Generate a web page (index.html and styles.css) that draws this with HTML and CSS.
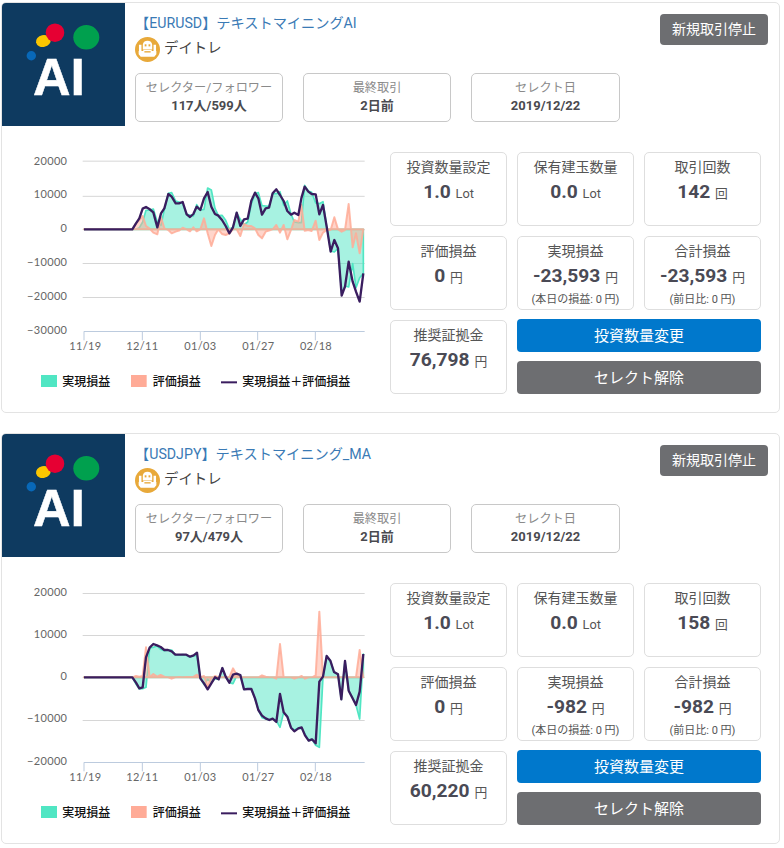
FILE: index.html
```html
<!DOCTYPE html>
<html lang="ja">
<head>
<meta charset="utf-8">
<title>セレクト一覧</title>
<link rel="stylesheet" href="styles.css">
</head>
<body>
<svg class="defs" width="0" height="0" aria-hidden="true">
  <defs>
    <symbol id="ai-logo" viewBox="0 0 123 123">
      <rect width="123" height="123" class="logo-bg"/>
      <ellipse cx="41.3" cy="38" rx="7.4" ry="6" transform="rotate(-12 41.3 38)" class="logo-yellow"/>
      <circle cx="53" cy="29.7" r="9.3" class="logo-red"/>
      <ellipse cx="84.3" cy="34.3" rx="13" ry="12.2" class="logo-green"/>
      <circle cx="29.3" cy="52.7" r="4.7" class="logo-blue"/>
      <text x="31" y="92" class="logo-text">AI</text>
    </symbol>
    <symbol id="trader" viewBox="0 0 24 24">
      <circle cx="12" cy="12" r="12" class="ic-bg"/>
      <path d="M7.500 12V7.500C7.500 5 9.500 3.500 12 3.500S16.500 5 16.500 7.500V12Z" class="ic-fg"/>
      <rect x="9.300" y="7" width="1.700" height="2" class="ic-bg"/>
      <rect x="13" y="7" width="1.700" height="2" class="ic-bg"/>
      <path d="M3.800 7.500h2.400v6h-2.400zM17.800 7.500h2.400v6h-2.400z" class="ic-fg"/>
      <path d="M3.500 13.500h4.500v-1h8v1h4.500v3l-2 2.500H5.500l-2-2.500z" class="ic-fg"/>
      <rect x="9" y="13.600" width="6" height="1.300" class="ic-bg"/>
    </symbol>
    <g id="legend">
      <rect x="123" y="705" width="48" height="36" class="sw-mint"/>
      <text x="187" y="737" class="lg">実現損益</text>
      <rect x="393" y="705" width="47" height="36" class="sw-pink"/>
      <text x="458" y="737" class="lg">評価損益</text>
      <rect x="663" y="724" width="48" height="6" class="sw-line"/>
      <text x="727" y="737" class="lg">実現損益＋評価損益</text>
    </g>
    <g id="xaxis">
      <path d="M252 574.500H1094M252 574V601M427 574V601M601 574V601M773 574V601M946 574V601" class="axis"/>
      <text x="256" y="629" class="tick mid">11/19</text>
      <text x="427" y="629" class="tick mid">12/11</text>
      <text x="601" y="629" class="tick mid">01/03</text>
      <text x="775" y="629" class="tick mid">01/27</text>
      <text x="948" y="629" class="tick mid">02/18</text>
    </g>
  </defs>
</svg>

<article class="card">
  <header class="head">
    <svg class="logo"><use href="#ai-logo"/></svg>
    <div class="info">
      <a class="title">【EURUSD】テキストマイニングAI</a>
      <div class="style-row"><svg class="style-icon"><use href="#trader"/></svg><span class="style-name">デイトレ</span></div>
      <div class="meta">
        <div class="meta-box"><span class="meta-label">セレクター/フォロワー</span><strong>117人/599人</strong></div>
        <div class="meta-box"><span class="meta-label">最終取引</span><strong>2日前</strong></div>
        <div class="meta-box"><span class="meta-label">セレクト日</span><strong>2019/12/22</strong></div>
      </div>
    </div>
    <button class="stop">新規取引停止</button>
  </header>
  <div class="body">
    <svg class="chart" viewBox="6 0 1134 810">
      <path d="M248 63.500H1094M248 169H1094M248 268.500H1094M248 370.500H1094M248 472.500H1094" class="grid"/>
      <use href="#xaxis"/>
      <text x="202" y="74" class="tick end">20000</text>
      <text x="202" y="175" class="tick end">10000</text>
      <text x="202" y="276" class="tick end">0</text>
      <text x="202" y="378" class="tick end">−10000</text>
      <text x="202" y="479" class="tick end">−20000</text>
      <text x="202" y="581" class="tick end">−30000</text>
      <polygon class="mint" points="252,268 397,268 408,268 418,263 428,246 438,211 448,210 460,207 472,247 483,256 493,208 505,160 515,158 527,183 537,186 548,191 560,223 570,225 580,228 590,194 601,210 612,208 623,144 634,150 645,205 655,227 666,226 677,241 688,268 699,262 710,218 721,238 732,254 743,246 754,192 765,161 775,158 786,197 797,198 807,199 818,160 829,161 840,155 851,196 862,183 873,222 883,246 895,248 904,248 914,136 925,153 935,157 947,189 958,191 969,185 980,258 992,333 1003,336 1014,325 1025,460 1035,438 1046,441 1058,371 1068,443 1079,413 1090,400 1090,268"/>
      <polygon class="pink" points="252,268 397,268 408,250 418,240 428,228 438,258 448,265 460,278 472,283 483,232 493,265 505,270 515,280 527,275 537,272 548,263 560,268 570,274 580,262 590,274 601,268 612,235 623,280 634,318 645,285 655,268 666,282 677,285 688,280 699,268 710,268 721,288 732,252 743,258 754,258 765,265 775,285 786,295 797,275 807,272 818,268 829,255 840,278 851,255 862,298 873,270 883,240 895,245 904,195 914,272 925,270 935,273 947,242 958,300 969,278 980,270 992,270 1003,232 1014,268 1025,275 1035,270 1046,192 1058,322 1068,280 1079,340 1090,268"/>
      <polyline class="total" points="252,268 397,268 408,250 418,235 428,206 438,201 448,207 460,217 472,262 483,220 493,205 505,162 515,170 527,190 537,190 548,186 560,223 570,231 580,222 590,200 601,210 612,175 623,156 634,200 645,222 655,227 666,240 677,258 688,280 699,262 710,218 721,258 732,238 743,236 754,182 765,158 775,175 786,224 797,205 807,203 818,160 829,148 840,165 851,183 862,213 873,224 883,218 895,225 904,175 914,140 925,155 935,162 947,163 958,223 969,195 980,260 992,335 1003,300 1014,325 1025,467 1035,440 1046,365 1058,425 1068,455 1079,485 1090,400"/>
      <use href="#legend"/>
    </svg>
    <div class="stats">
      <div class="stat"><span class="label">投資数量設定</span><p class="value">1.0 <small>Lot</small></p></div>
      <div class="stat"><span class="label">保有建玉数量</span><p class="value">0.0 <small>Lot</small></p></div>
      <div class="stat"><span class="label">取引回数</span><p class="value">142 <small>回</small></p></div>
      <div class="stat"><span class="label">評価損益</span><p class="value">0 <small>円</small></p></div>
      <div class="stat"><span class="label">実現損益</span><p class="value">-23,593 <small>円</small></p><span class="sub">(本日の損益: 0 円)</span></div>
      <div class="stat"><span class="label">合計損益</span><p class="value">-23,593 <small>円</small></p><span class="sub">(前日比: 0 円)</span></div>
      <div class="stat"><span class="label">推奨証拠金</span><p class="value">76,798 <small>円</small></p></div>
      <div class="actions">
        <button class="btn btn-blue">投資数量変更</button>
        <button class="btn btn-gray">セレクト解除</button>
      </div>
    </div>
  </div>
</article>

<article class="card">
  <header class="head">
    <svg class="logo"><use href="#ai-logo"/></svg>
    <div class="info">
      <a class="title">【USDJPY】テキストマイニング_MA</a>
      <div class="style-row"><svg class="style-icon"><use href="#trader"/></svg><span class="style-name">デイトレ</span></div>
      <div class="meta">
        <div class="meta-box"><span class="meta-label">セレクター/フォロワー</span><strong>97人/479人</strong></div>
        <div class="meta-box"><span class="meta-label">最終取引</span><strong>2日前</strong></div>
        <div class="meta-box"><span class="meta-label">セレクト日</span><strong>2019/12/22</strong></div>
      </div>
    </div>
    <button class="stop">新規取引停止</button>
  </header>
  <div class="body">
    <svg class="chart" viewBox="6 3 1134 810">
      <path d="M248 70.500H1094M248 196.500H1094M248 322.500H1094M248 451.500H1094" class="grid"/>
      <use href="#xaxis" class="shift"/>
      <text x="202" y="77" class="tick end">20000</text>
      <text x="202" y="203" class="tick end">10000</text>
      <text x="202" y="330" class="tick end">0</text>
      <text x="202" y="456" class="tick end">−10000</text>
      <text x="202" y="584" class="tick end">−20000</text>
      <polygon class="mint" points="252,322 397,322 408,342 418,357 428,356 438,352 449,233 460,232 471,228 482,238 493,242 504,240 515,240 526,254 537,255 548,254 559,255 570,261 581,258 591,256 601,325 612,344 623,328 634,337 645,326 656,328 667,294 677,320 688,338 699,341 710,318 721,315 732,358 743,357 754,357 765,385 775,420 786,443 797,447 808,450 818,446 829,452 840,472 851,427 862,440 873,473 883,480 895,475 905,476 915,492 926,512 936,508 947,526 958,532 969,320 980,258 991,272 1002,306 1014,313 1024,388 1035,273 1046,362 1057,383 1068,405 1079,447 1090,252 1090,322"/>
      <polygon class="pink" points="252,322 397,322 408,318 418,320 428,318 438,232 449,322 460,312 471,320 482,315 493,320 504,322 515,326 526,322 537,321 548,322 559,321 570,321 581,320 591,314 601,322 612,318 623,352 634,325 645,318 656,322 688,322 699,295 710,315 721,322 775,322 786,316 797,320 808,322 818,322 829,326 840,222 851,322 873,322 883,326 895,322 905,318 915,326 926,322 936,322 947,316 958,125 969,322 1068,322 1079,240 1090,322"/>
      <polyline class="total" points="252,322 397,322 408,338 418,355 428,352 438,262 449,233 460,222 471,226 482,231 493,240 504,240 515,244 526,254 537,254 548,254 559,254 570,260 581,256 591,248 601,325 612,340 623,358 634,340 645,322 656,328 667,294 677,320 688,338 699,314 710,311 721,315 732,358 743,357 754,357 765,385 775,420 786,437 797,445 808,450 818,446 829,456 840,372 851,427 862,440 873,473 883,484 895,475 905,472 915,496 926,512 936,508 947,520 958,335 969,320 980,258 991,272 1002,306 1014,313 1024,388 1035,273 1046,362 1057,383 1068,405 1079,365 1090,252"/>
      <use href="#legend" class="shift"/>
    </svg>
    <div class="stats">
      <div class="stat"><span class="label">投資数量設定</span><p class="value">1.0 <small>Lot</small></p></div>
      <div class="stat"><span class="label">保有建玉数量</span><p class="value">0.0 <small>Lot</small></p></div>
      <div class="stat"><span class="label">取引回数</span><p class="value">158 <small>回</small></p></div>
      <div class="stat"><span class="label">評価損益</span><p class="value">0 <small>円</small></p></div>
      <div class="stat"><span class="label">実現損益</span><p class="value">-982 <small>円</small></p><span class="sub">(本日の損益: 0 円)</span></div>
      <div class="stat"><span class="label">合計損益</span><p class="value">-982 <small>円</small></p><span class="sub">(前日比: 0 円)</span></div>
      <div class="stat"><span class="label">推奨証拠金</span><p class="value">60,220 <small>円</small></p></div>
      <div class="actions">
        <button class="btn btn-blue">投資数量変更</button>
        <button class="btn btn-gray">セレクト解除</button>
      </div>
    </div>
  </div>
</article>
</body>
</html>
```
FILE: styles.css
```css
* { box-sizing: border-box; }
html, body { margin: 0; background: #fff; }
body {
  padding: 2px 4px 0 1px;
  font-family: Roboto, "Noto Sans CJK JP", sans-serif;
  color: #4a4a4f;
}
.defs { position: absolute; }
.card {
  width: 779px;
  height: 411px;
  margin-bottom: 20px;
  border: 1px solid #e3e3e3;
  border-radius: 5px;
  overflow: hidden;
}
.head { display: flex; height: 123px; }
.logo { width: 123px; height: 123px; flex: none; }
.logo-bg { fill: #0e3a60; }
.logo-red { fill: #e60033; }
.logo-yellow { fill: #fbc600; }
.logo-green { fill: #00a04e; }
.logo-blue { fill: #0868b8; }
.logo-text { fill: #fff; stroke: #fff; stroke-width: .5; font: 700 52px "Liberation Sans", sans-serif; }
.info { width: 495px; padding: 10px 0 0 10px; flex: none; }
.title { display: block; height: 20px; font-size: 14.2px; line-height: 20px; color: #3a7ab5; }
.style-row { display: flex; align-items: center; gap: 4px; height: 25px; margin-top: 4px; font-size: 14.4px; color: #444; }
.style-name { padding-bottom: 7px; }
.style-icon { width: 25px; height: 25px; flex: none; }
.ic-bg { fill: #e8a93a; }
.ic-fg { fill: #fff; }
.meta { display: flex; gap: 20px; margin-top: 11px; }
.meta-box {
  display: flex;
  flex-direction: column;
  align-items: center;
  width: 148px;
  height: 49px;
  padding-top: 5px;
  border: 1px solid #c8c8c8;
  border-radius: 5px;
}
.meta-box:last-child { width: 149px; }
.meta-label { font-size: 12.2px; line-height: 19px; color: #8a8a8a; }
.meta-box strong { font-size: 13px; line-height: 16px; font-weight: 700; color: #4a4a4f; }
.stop {
  width: 108px;
  height: 31px;
  margin: 11px 0 0 40px;
  padding: 0 0 4px;
  border: 0;
  border-radius: 4px;
  background: #6d6e71;
  color: #fff;
  font: 14px Roboto, "Noto Sans CJK JP", sans-serif;
}
.body { display: flex; }
.chart { width: 378px; height: 270px; margin-top: 14px; flex: none; }
.grid { fill: none; stroke: #d6d6d6; stroke-width: 3; }
.axis { fill: none; stroke: #bccbde; stroke-width: 3; }
.tick { font: 33px Lato, sans-serif; letter-spacing: 1px; fill: #666; }
.end { text-anchor: end; }
.mid { text-anchor: middle; }
.shift { transform: translateY(3px); }
.mint { fill: #50e6c3; fill-opacity: .5; stroke: #50e6c3; stroke-width: 5; stroke-linejoin: round; }
.pink { fill: #ffab97; fill-opacity: .5; stroke: #ffab97; stroke-opacity: .85; stroke-width: 6; stroke-linejoin: round; }
.total { fill: none; stroke: #3a1d5f; stroke-width: 7; stroke-linejoin: round; }
.lg { font: 500 36px "Noto Sans CJK JP", sans-serif; fill: #111; }
.sw-mint { fill: #50e6c3; }
.sw-pink { fill: #ffab97; }
.sw-line { fill: #3a1d5f; }
.stats {
  display: grid;
  grid-template-columns: repeat(3, 117px);
  grid-auto-rows: 74px;
  gap: 10px;
  margin: 26px 0 0 10px;
}
.stat {
  display: flex;
  flex-direction: column;
  align-items: center;
  padding-top: 4px;
  border: 1px solid #dedede;
  border-radius: 5px;
}
.label { font-size: 14px; line-height: 20px; color: #555; }
.value { margin: 0; font-size: 19.2px; line-height: 30px; font-weight: 700; color: #4a4a55; white-space: nowrap; }
.value small { font-size: 12.8px; font-weight: 400; color: #555; }
.sub { margin-top: -1px; font-size: 11px; line-height: 16px; color: #555; white-space: nowrap; }
.actions { grid-column: span 2; display: flex; flex-direction: column; gap: 9px; margin-top: -1px; }
.btn {
  height: 33px;
  padding: 0 0 3px;
  border: 0;
  border-radius: 4px;
  color: #fff;
  font: 15px Roboto, "Noto Sans CJK JP", sans-serif;
}
.btn-blue { background: #0078cc; }
.btn-gray { background: #6d6e71; }
```
